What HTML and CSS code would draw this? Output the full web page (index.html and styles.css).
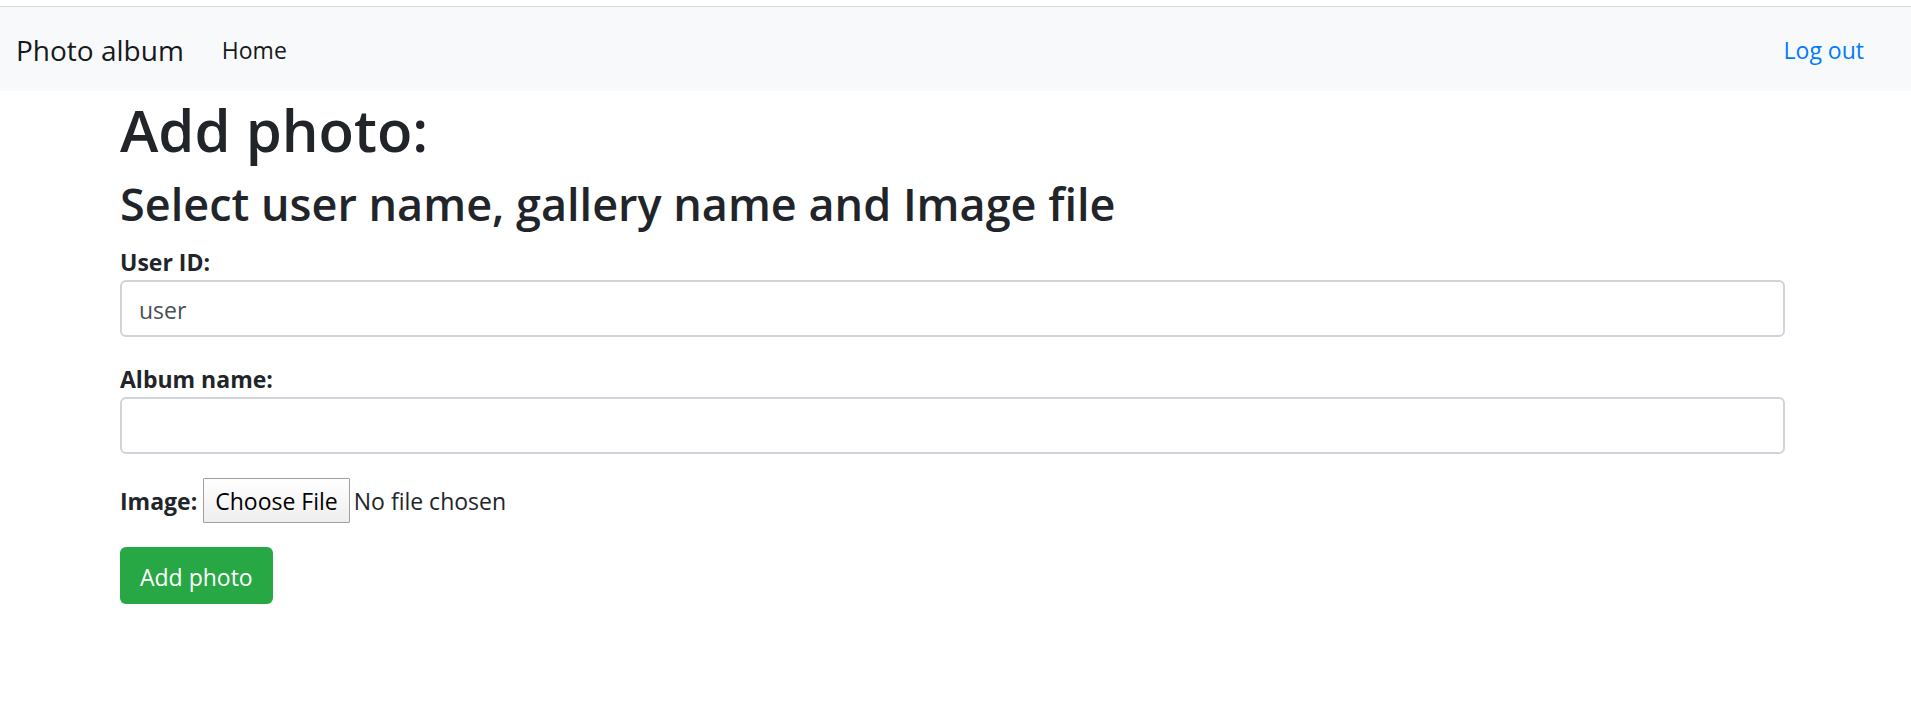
FILE: index.html
```html
<!DOCTYPE html>
<html lang="en">
<head>
<meta charset="utf-8">
<title>Photo album</title>
<link rel="stylesheet" href="styles.css">
</head>
<body>
<nav class="navbar">
  <a class="brand" href="#">Photo album</a>
  <a class="nav-link" href="#">Home</a>
  <a class="logout" href="#">Log out</a>
</nav>
<main class="container">
  <h1 class="title">Add photo:</h1>
  <h2 class="subtitle">Select user name, gallery name and Image file</h2>
  <form class="form">
    <div class="group">
      <label class="label" for="user">User ID:</label>
      <input class="control" id="user" type="text" value="user">
    </div>
    <div class="group">
      <label class="label" for="album">Album name:</label>
      <input class="control" id="album" type="text">
    </div>
    <div class="file-row">
      <label class="label" for="image">Image:</label>
      <input class="file" id="image" type="file">
    </div>
    <button class="submit" type="button">Add photo</button>
  </form>
</main>
</body>
</html>
```
FILE: styles.css
```css
* {
  box-sizing: border-box;
}

body {
  margin: 0;
  padding-top: 6px;
  background: #fff;
  color: #212529;
  font-family: "Segoe UI", "Open Sans", "Noto Sans", sans-serif;
  font-size: 23px;
  line-height: 36px;
}

.navbar {
  display: flex;
  align-items: center;
  min-height: 85px;
  padding: 2px 47px 0 16px;
  border-top: 1px solid #d6dadd;
  background: #f8f9fa;
}

.navbar a {
  text-decoration: none;
}

.brand {
  margin-right: 38px;
  color: #17191b;
  font-size: 28px;
}

.nav-link {
  color: #17191b;
}

.logout {
  margin-left: auto;
  color: #007bff;
}

.container {
  max-width: 1671px;
  margin: 0 auto;
  padding-right: 6px;
}

.title,
.subtitle {
  font-weight: 600;
}

.title {
  margin: 0 0 6px;
  font-size: 58px;
  line-height: 78px;
}

.subtitle {
  margin: 0 0 12px;
  font-size: 45px;
  line-height: 57px;
}

.form {
  display: flex;
  flex-direction: column;
  align-items: flex-start;
  gap: 24px;
}

.group {
  display: flex;
  flex-direction: column;
  width: 100%;
}

.label {
  font-weight: 700;
}

.control {
  width: 100%;
  height: 57px;
  padding: 10px 17px 8px;
  border: 2px solid #ced4da;
  border-radius: 6px;
  background: #fff;
  color: #495057;
  font: inherit;
}

.file-row {
  display: flex;
  align-items: center;
  gap: 6px;
}

.file {
  width: 460px;
  font: inherit;
}

.file::file-selector-button {
  height: 45px;
  margin: 0 4px 0 0;
  padding: 0 11px;
  border: 1px solid #a0a0a0;
  border-radius: 1px;
  background: linear-gradient(#fff, #eee);
  color: #000;
  font: inherit;
}

.submit {
  height: 57px;
  padding: 2px 20px 0;
  border: 0;
  border-radius: 6px;
  background: #28a745;
  color: #fff;
  font: inherit;
}
```
